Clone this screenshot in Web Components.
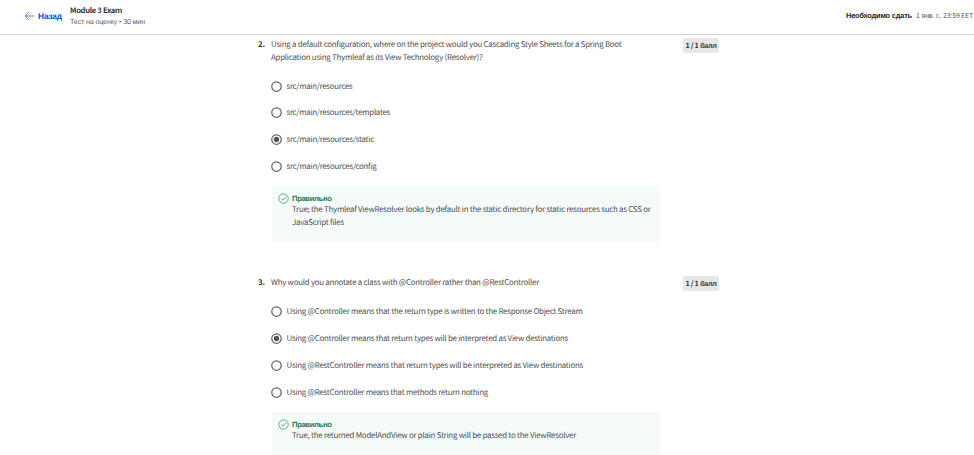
<!DOCTYPE html>
<html lang="ru"><head><meta charset="utf-8"><title>Module 3 Exam</title>
<style>
html,body{margin:0;height:455px;overflow:hidden;background:#fff}
body{font:7.9px/12.4px "Noto Sans CJK SC","Liberation Sans",sans-serif;color:#505050;text-rendering:geometricPrecision}
</style></head><body>
<exam-page></exam-page>
<script>
const define=(name,html,setup)=>customElements.define(name,class extends HTMLElement{
  connectedCallback(){
    if(this.shadowRoot)return;
    const t=document.createElement('template');t.innerHTML=html;
    this.attachShadow({mode:'open'}).append(t.content.cloneNode(true));
    if(setup)setup(this,this.shadowRoot);
  }
});
// One line of text, tracked so that it fills the width given in "w"
define('text-line',`<style>:host{display:block;white-space:nowrap}span{display:inline-block}</style><span><slot></slot></span>`,(h,r)=>{
  const w=+h.getAttribute('w');if(!w)return;
  const s=r.querySelector('span');
  s.style.letterSpacing=(w-s.getBoundingClientRect().width)/h.textContent.length+'px';
});
define('exam-header',`<style>
:host{display:flex;box-sizing:border-box;height:35px;border-bottom:1px solid #d6d6d6;align-items:flex-start;padding:0 1px 0 24px;font-family:"Liberation Sans",sans-serif}
svg{width:10px;height:10px;margin-top:10.5px;flex:none}
.back{margin:10px 0 0 4px;color:#0056d2;font-weight:700;font-size:8.4px}
.t{margin:5px 0 0 8px;line-height:11px;font-size:7.2px;color:#666}
.n{font:700 7.6px/11px "Noto Sans CJK SC",sans-serif;color:#333}
.due{margin:10px 0 0 auto;font-weight:700;font-size:7.4px;color:#222}
.date{margin:10px 0 0 4px;font-size:7px;color:#555}
.l{font-family:"Noto Sans CJK SC",sans-serif}
</style>
<svg viewBox="0 0 10 10" fill="none" stroke="#2a70d8" stroke-width=".85"><path d="M10 5H1M4.8 1.2 1 5l3.8 3.8"/></svg>
<text-line class="back" w="24">Назад</text-line>
<div class="t"><text-line class="n" w="52">Module 3 Exam</text-line><text-line w="75">Тест на оценку • 30 мин</text-line></div>
<text-line class="due" w="66">Необходимо сдать</text-line><text-line class="date" w="57"><span class="l">1</span> янв. г., <span class="l">23:59 EET</span></text-line>`);
define('score-badge',`<style>:host{display:block;box-sizing:border-box;width:36px;height:15px;margin-top:3px;border-radius:2px;background:#e5e7e8;padding-left:2.5px;font:700 7.2px/15px "Liberation Sans",sans-serif;color:#333}.l{font-family:"Noto Sans CJK SC",sans-serif}</style><text-line w="31"><span class="l">1 / 1</span> балл</text-line>`);
define('answer-option',`<style>
:host{display:flex;align-items:center;height:26.75px;gap:4.5px}
::slotted(*){padding-top:1.6px}
svg{width:11px;height:11px;flex:none}circle+circle{display:none}:host([checked]) circle+circle{display:block}
</style><svg viewBox="0 0 11 11"><circle cx="5.5" cy="5.5" r="4.75" fill="none" stroke="#666" stroke-width="1.25"/><circle cx="5.5" cy="5.5" r="2.7" fill="#555"/></svg><slot></slot>`);
define('answer-feedback',`<style>
:host{display:flex;box-sizing:border-box;width:388.5px;background:#f5fbf9;padding:6.6px 0 13px 6.5px;margin:6.5px 0 0 .5px;gap:3px}
svg{width:11px;height:11px;flex:none}
.b{font:700 7.7px/11.6px "Liberation Sans",sans-serif;color:#1d7c50}
</style><svg viewBox="0 0 11 11" fill="none" stroke="#369568" stroke-width=".8"><circle cx="5.5" cy="5.5" r="4.7"/><path d="m3.2 5.6 1.7 1.6 3-3.2"/></svg>
<div><text-line class="b" w="39.5">Правильно</text-line><slot></slot></div>`);
define('exam-question',`<style>
:host{display:grid;grid-template-columns:13px 412px 36px;margin-left:258px}
.n{font-weight:700;color:#333;padding-top:4.1px}
.p{padding-top:4.1px}.o{padding-top:8.8px}
</style><div class="n"><slot name="num"></slot></div><div><div class="p"><slot name="prompt"></slot></div><div class="o"><slot></slot></div></div><score-badge></score-badge>`);
define('exam-page',`<style>:host{display:block}main{display:grid;gap:31px}</style>
<exam-header></exam-header><main>
<exam-question><text-line slot="num" w="7">2.</text-line>
<text-line slot="prompt" w="350.5">Using a default configuration, where on the project would you Cascading Style Sheets for a Spring Boot</text-line>
<text-line slot="prompt" w="211.5">Application using Thymleaf as its View Technology (Resolver)?</text-line>
<answer-option><text-line w="66">src/main/resources</text-line></answer-option>
<answer-option><text-line w="103.5">src/main/resources/templates</text-line></answer-option>
<answer-option checked><text-line w="87.5">src/main/resources/static</text-line></answer-option>
<answer-option><text-line w="90">src/main/resources/config</text-line></answer-option>
<answer-feedback><text-line w="358.5">True; the Thymleaf ViewResolver looks by default in the static directory for static resources such as CSS or</text-line><text-line w="52">JavaScript files</text-line></answer-feedback></exam-question>
<exam-question><text-line slot="num" w="7">3.</text-line>
<text-line slot="prompt" w="268">Why would you annotate a class with @Controller rather than @RestController</text-line>
<answer-option><text-line w="296">Using @Controller means that the return type is written to the Response Object Stream</text-line></answer-option>
<answer-option checked><text-line w="281.5">Using @Controller means that return types will be interpreted as View destinations</text-line></answer-option>
<answer-option><text-line w="296.5">Using @RestController means that return types will be interpreted as View destinations</text-line></answer-option>
<answer-option><text-line w="201.5">Using @RestController means that methods return nothing</text-line></answer-option>
<answer-feedback style="padding-bottom:16px"><text-line w="284">True, the returned ModelAndView or plain String will be passed to the ViewResolver</text-line></answer-feedback></exam-question>
</main>`);
</script></body></html>
